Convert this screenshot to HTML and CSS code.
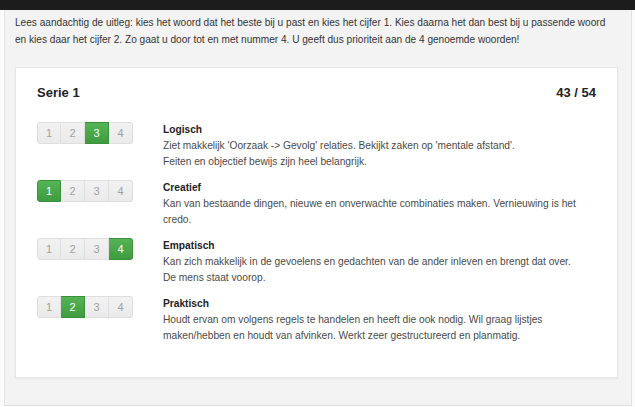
FILE: index.html
```html
<!DOCTYPE html>
<html lang="nl">

<head>
    <meta charset="UTF-8">
    <meta name="viewport" content="width=device-width, initial-scale=1.0">
    <title>Serie 1</title>
    <link rel="stylesheet" href="styles.css">
</head>

<body>
    <div class="topbar"></div>
    <div class="page">
        <p class="intro">Lees aandachtig de uitleg: kies het woord dat het beste bij u past en kies het cijfer 1. Kies daarna het dan best bij u passende woord en kies daar het cijfer 2. Zo gaat u door tot en met nummer 4. U geeft dus prioriteit aan de 4 genoemde woorden!</p>

        <div class="card">
            <div class="card-head">
                <h3>Serie 1</h3>
                <span class="count">43 / 54</span>
            </div>

            <div class="row">
                <div class="btn-group">
                    <span class="btn">1</span>
                    <span class="btn">2</span>
                    <span class="btn on">3</span>
                    <span class="btn">4</span>
                </div>
                <div class="desc">
                    <strong>Logisch</strong>
                    Ziet makkelijk 'Oorzaak -&gt; Gevolg' relaties. Bekijkt zaken op 'mentale afstand'.<br>
                    Feiten en objectief bewijs zijn heel belangrijk.
                </div>
            </div>

            <div class="row">
                <div class="btn-group">
                    <span class="btn on">1</span>
                    <span class="btn">2</span>
                    <span class="btn">3</span>
                    <span class="btn">4</span>
                </div>
                <div class="desc">
                    <strong>Creatief</strong>
                    Kan van bestaande dingen, nieuwe en onverwachte combinaties maken. Vernieuwing is het credo.
                </div>
            </div>

            <div class="row">
                <div class="btn-group">
                    <span class="btn">1</span>
                    <span class="btn">2</span>
                    <span class="btn">3</span>
                    <span class="btn on">4</span>
                </div>
                <div class="desc">
                    <strong>Empatisch</strong>
                    Kan zich makkelijk in de gevoelens en gedachten van de ander inleven en brengt dat over.<br>
                    De mens staat voorop.
                </div>
            </div>

            <div class="row">
                <div class="btn-group">
                    <span class="btn">1</span>
                    <span class="btn on">2</span>
                    <span class="btn">3</span>
                    <span class="btn">4</span>
                </div>
                <div class="desc">
                    <strong>Praktisch</strong>
                    Houdt ervan om volgens regels te handelen en heeft die ook nodig. Wil graag lijstjes maken/hebben en houdt van afvinken. Werkt zeer gestructureerd en planmatig.
                </div>
            </div>
        </div>
    </div>
</body>

</html>
```

FILE: styles.css
```css
* {
    margin: 0;
    padding: 0;
    box-sizing: border-box;
}

body {
    font-family: "Liberation Sans", Arial, sans-serif;
    font-size: 10px;
    color: #333;
    background: #fbfbfb;
}

.topbar {
    height: 10px;
    background: #1c1c1c;
}

.page {
    margin: 0 3px 2px 4px;
    padding: 4px 10px 27px 10px;
    background: #f3f3f3;
    border: 1px solid #e2e2e2;
    border-top: 0;
}

.intro {
    font-size: 10.1px;
    line-height: 17px;
    color: #333;
    padding-right: 6px;
    margin-bottom: 19px;
}

.card {
    margin-right: 3px;
    background: #fff;
    border: 1px solid #e6e6e6;
    box-shadow: 0 1px 2px rgba(0, 0, 0, .05);
    padding: 16px 21px 33px 21px;
}

.card-head {
    display: flex;
    justify-content: space-between;
    align-items: center;
    height: 17px;
    margin-bottom: 21px;
}

.card-head h3,
.card-head .count {
    font-size: 13px;
    font-weight: bold;
    color: #222;
}

.row {
    display: grid;
    grid-template-columns: 126px 415px;
    margin-bottom: 10px;
}

.row:last-child {
    margin-bottom: 0;
}

.btn-group {
    display: flex;
    align-self: start;
}

.btn {
    width: 24px;
    height: 22px;
    line-height: 20px;
    text-align: center;
    font-size: 11px;
    color: #a0a0a0;
    background: linear-gradient(#f2f2f2, #eaeaea);
    border: 1px solid #dedede;
    border-left: 0;
}

.btn:first-child {
    border-left: 1px solid #dedede;
    border-radius: 3px 0 0 3px;
}

.btn:last-child {
    border-radius: 0 3px 3px 0;
}

.btn.on {
    color: #fff;
    background: linear-gradient(#55b455, #3f9b3f);
    border-color: #3a913a;
}

.desc {
    font-size: 10.2px;
    line-height: 16px;
    color: #4a4a4a;
}

.desc strong {
    display: block;
    color: #222;
}
```
